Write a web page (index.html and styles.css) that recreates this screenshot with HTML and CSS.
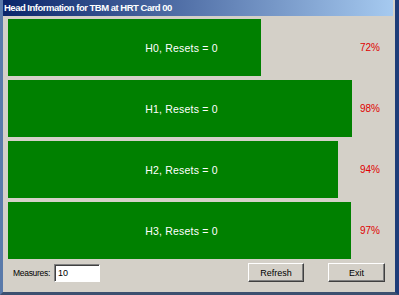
FILE: index.html
```html
<!DOCTYPE html>
<html lang="en">
<head>
  <meta charset="UTF-8">
  <title>Head Information</title>
  <link rel="stylesheet" href="styles.css">
</head>
<body>
  <div class="window">
    <div class="titlebar">Head Information for TBM at HRT Card 00</div>
    <div class="client">
      <div class="heads">
        <div class="head">
          <div class="track" style="--fill:253px">H0, Resets = 0</div>
          <span class="pct">72%</span>
        </div>
        <div class="head">
          <div class="track" style="--fill:344px">H1, Resets = 0</div>
          <span class="pct">98%</span>
        </div>
        <div class="head">
          <div class="track" style="--fill:330px">H2, Resets = 0</div>
          <span class="pct">94%</span>
        </div>
        <div class="head">
          <div class="track" style="--fill:343px">H3, Resets = 0</div>
          <span class="pct">97%</span>
        </div>
      </div>
      <div class="footer">
        <label class="measures">Measures:
          <input type="text" id="measures" value="10" />
        </label>
        <button type="button" id="refreshButton">Refresh</button>
        <button type="button" id="exitButton">Exit</button>
      </div>
    </div>
  </div>
</body>
</html>
```

FILE: styles.css
```css
body { margin: 0; background: #d4d0c8; font-family: "Liberation Sans", Arial, sans-serif; }
.window { height: 295px; box-sizing: border-box; border-left: 3px solid #5a7aaa; border-right: 4px solid #1e3c78; border-bottom: 3px solid #3c5070; background: #d4d0c8; display: flex; flex-direction: column; }
.titlebar { height: 16px; margin-right: 2px; padding-left: 1px; background: linear-gradient(to right, #0a246a, #a6caf0); color: #fff; font-weight: bold; font-size: 9.5px; letter-spacing: -0.5px; line-height: 16px; white-space: nowrap; }
.client { flex: 1; padding: 3px 10px 0 5px; display: flex; flex-direction: column; }
.heads { display: flex; flex-direction: column; gap: 4px; }
.head { display: flex; align-items: center; height: 57px; }
.track { width: 347px; height: 100%; display: flex; align-items: center; justify-content: center; color: #fff; font-size: 10.5px; letter-spacing: 0.2px; background: linear-gradient(to right, #008000 var(--fill), transparent var(--fill)); }
.pct { margin-left: 5px; color: #e00000; font-size: 10px; }
.footer { display: flex; align-items: center; margin-top: 4px; height: 19px; }
.measures { display: flex; align-items: center; padding-left: 5px; font-size: 8.5px; letter-spacing: -0.3px; color: #000; }
.measures input { width: 46px; height: 18px; box-sizing: border-box; margin: 0 0 0 4px; padding: 0 3px; font: 9px "Liberation Sans", Arial, sans-serif; background: #fff; border: 1px solid; border-color: #808080 #fff #fff #808080; box-shadow: inset 1px 1px 0 #404040; outline: none; }
button { width: 57px; height: 19px; padding: 0; background: #d4d0c8; color: #000; font: 9px "Liberation Sans", Arial, sans-serif; border: 1px solid; border-color: #fff #404040 #404040 #fff; box-shadow: inset -1px -1px 0 #808080; }
#refreshButton { margin-left: auto; width: 56px; }
#exitButton { margin-left: 24px; }
```
